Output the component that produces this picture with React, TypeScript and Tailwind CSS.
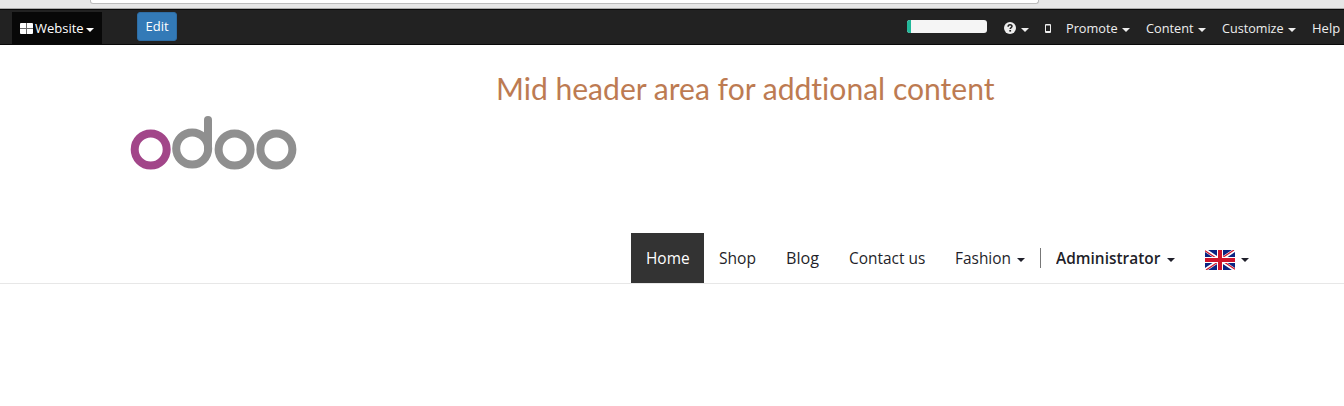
import type { ReactNode } from "react";

function Caret({ className = "" }: { className?: string }) {
  return (
    <svg viewBox="0 0 8 4" className={`block h-1 w-2 shrink-0 ${className}`} fill="currentColor">
      <path d="M0 0H8L4 4Z" />
    </svg>
  );
}

function Word({ className = "", children }: { className?: string; children: ReactNode }) {
  return <span className={`block origin-left whitespace-nowrap ${className}`}>{children}</span>;
}

function BrowserEdge() {
  return (
    <div className="flex h-[9px] shrink-0 border-b border-[#a9a9a9] bg-[#e6e6e6] pl-[90px]">
      <div className="h-1 w-[949px] rounded-b-[3px] border border-t-0 border-[#bcbcbc] bg-white" />
    </div>
  );
}

function TopBar() {
  return (
    <div className="flex h-9 shrink-0 items-start border-y border-[#080808] bg-[#222222] pl-3 text-[13px] leading-4 text-[#eeeeee]">
      <div className="mt-0.5 flex h-8 w-[90px] items-center bg-[#080808] pl-2 text-white">
        <svg viewBox="0 0 13 11" className="h-[11px] w-[13px] shrink-0" fill="currentColor">
          <path d="M0 1Q0 0 1 0H6V5H0ZM7 0H12Q13 0 13 1V5H7ZM0 6H6V11H1Q0 11 0 10ZM7 6H13V10Q13 11 12 11H7Z" />
          <path d="M6 0H7V11H6ZM0 5H13V6H0Z" opacity=".4" />
        </svg>
        <Word className="ml-[2px] w-[49px]">Website</Word>
        <Caret className="mt-1 ml-[2px]" />
      </div>
      <div className="mt-0.5 ml-[35px] flex h-[29px] w-10 items-center justify-center rounded-[3px] border border-[#2e6da4] bg-[#337ab7] pb-0.5 text-white">
        Edit
      </div>
      <div className="mt-[10px] ml-[730px] h-[13px] w-20 shrink-0 overflow-hidden rounded-[3px] bg-[#f5f5f5]">
        <div className="h-full w-1 bg-[#21b799]" />
      </div>
      <div className="mt-[10px] flex h-4 shrink-0 items-center pl-[17px]">
        <svg viewBox="0 0 12 12" className="h-3 w-3">
          <circle cx="6" cy="6" r="6" fill="currentColor" />
          <path d="M4.1 4.7C4.1 2.1 8 2.2 8 4.3C8 5.7 6.2 5.5 6.2 7" fill="none" stroke="#222" strokeWidth="1.5" />
          <path d="M5.3 8H7.1V9.6H5.3Z" fill="#222" />
        </svg>
        <Caret className="mt-1 ml-[5px]" />
        <svg viewBox="0 0 6 9" className="ml-4 h-[9px] w-[6px]">
          <rect width="6" height="9" rx="1" fill="currentColor" />
          <path d="M1 1.5H5V7H1Z" fill="#222" />
        </svg>
        <Word className="ml-[15px] w-[52px] scale-x-[.98]">Promote</Word>
        <Caret className="mt-1 ml-1" />
        <Word className="ml-4 w-12 scale-x-[.98]">Content</Word>
        <Caret className="mt-1 ml-1" />
        <Word className="ml-4 w-[62px] scale-x-[.97]">Customize</Word>
        <Caret className="mt-1 ml-1" />
        <Word className="ml-4 w-7">Help</Word>
      </div>
    </div>
  );
}

function Logo() {
  return (
    <svg viewBox="130 116 167 54" className="mt-[71px] ml-[130px] h-[54px] w-[167px] shrink-0" fill="none" strokeWidth="8">
      <circle cx="150.7" cy="149.5" r="16" stroke="#a24689" />
      <g stroke="#8f8f8f">
        <circle cx="234.6" cy="149.5" r="16" />
        <circle cx="276.4" cy="149.5" r="16" />
        <circle cx="192.2" cy="148.5" r="16" />
        <path d="M208 120V148.5" strokeLinecap="round" />
      </g>
    </svg>
  );
}

function Flag() {
  return (
    <svg viewBox="0 0 30 20" className="mt-1 h-5 w-[30px] shrink-0">
      <path fill="#0b2482" d="M0 0H30V20H0Z" />
      <path stroke="#fff" strokeWidth="3.4" d="M0 0L30 20M30 0L0 20" />
      <path stroke="#cf142b" strokeWidth="1.2" d="M0 .7L14 10M30 19.3L16 10M29 0L15 9.3M1 20L15 10.7" />
      <path stroke="#fff" strokeWidth="6" d="M15 0V20M0 10H30" />
      <path stroke="#cf142b" strokeWidth="4" d="M15 0V20M0 10H30" />
    </svg>
  );
}

function Navigation() {
  return (
    <nav className="flex h-[50px] shrink-0 items-center pl-[631px] text-[16.5px] leading-5 text-[#1f1f2a]">
      <div className="flex h-full w-[73px] items-center bg-[#333333] pl-[15px] text-white">
        <Word className="scale-x-[.935]">Home</Word>
      </div>
      <Word className="ml-[15px] w-[67px] scale-x-[.945]">Shop</Word>
      <Word className="w-[63px] scale-x-[.98]">Blog</Word>
      <Word className="w-[106px] scale-x-[.935]">Contact us</Word>
      <Word className="w-[62px] scale-x-[.935]">Fashion</Word>
      <Caret className="mt-1" />
      <div className="ml-[15px] h-5 w-px bg-[#777777]" />
      <Word className="ml-[15px] w-[111px] scale-x-[.935] font-semibold">Administrator</Word>
      <Caret className="mt-1" />
      <div className="ml-[30px]"><Flag /></div>
      <Caret className="mt-1 ml-[6px]" />
    </nav>
  );
}

export default function App() {
  return (
    <div className="flex h-[406px] w-full flex-col overflow-hidden bg-white font-['Open_Sans','Noto_Sans',sans-serif]">
      <BrowserEdge />
      <TopBar />
      <header className="flex h-[239px] shrink-0 flex-col border-b border-[#e7e7e7]">
        <div className="flex h-[188px] items-start">
          <Logo />
          <h1 className="mt-6 ml-[199px] origin-left scale-x-[.986] whitespace-nowrap font-['Lato',sans-serif] text-[30.5px] leading-[38px] text-[#bd7b52] [font-variant-ligatures:none]">
            Mid header area for addtional content
          </h1>
        </div>
        <Navigation />
      </header>
    </div>
  );
}
